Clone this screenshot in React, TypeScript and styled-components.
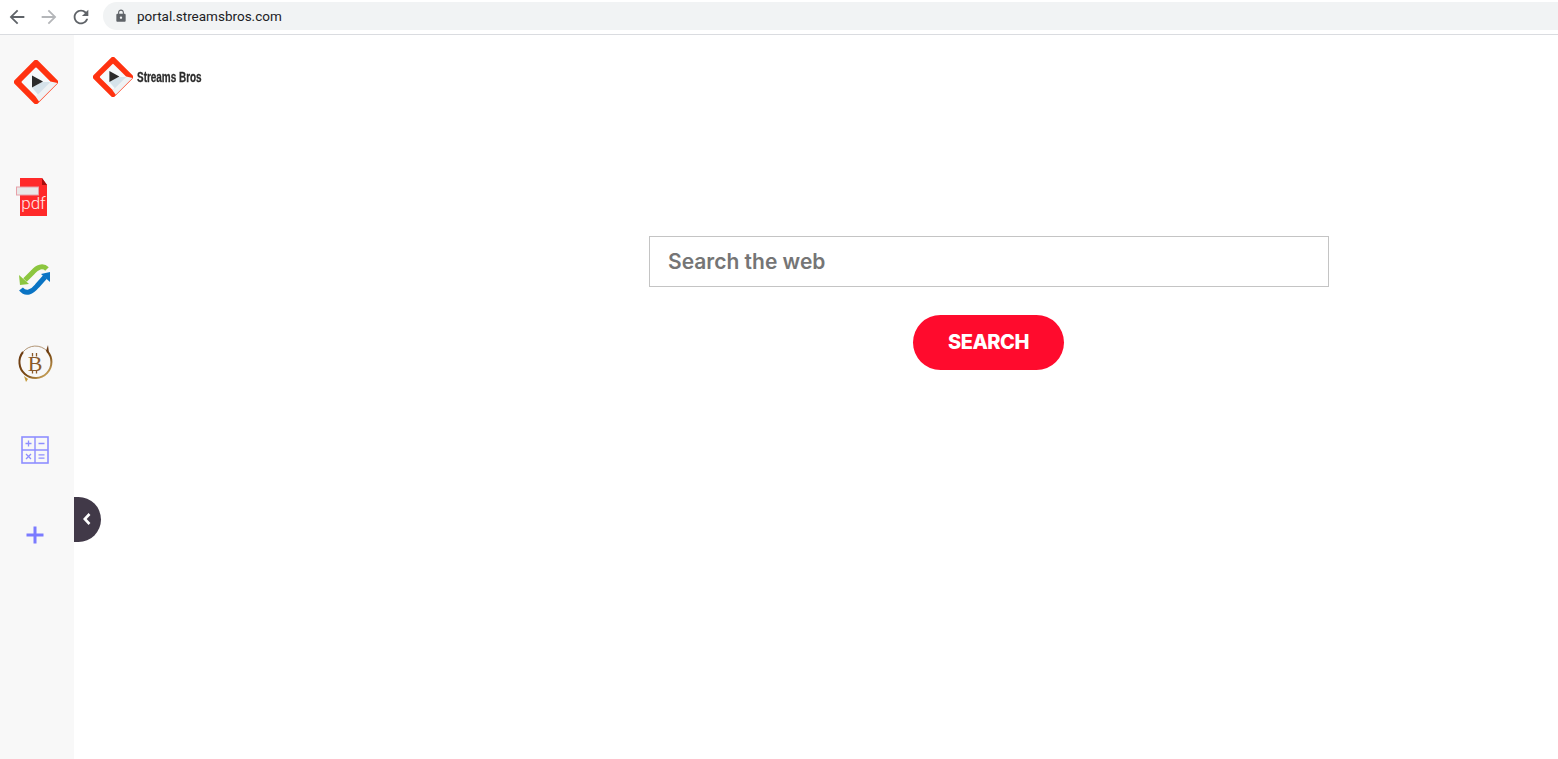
import React from "react";
import styled, { createGlobalStyle } from "styled-components";

const GlobalStyle = createGlobalStyle`
  html, body {
    margin: 0;
    height: 100%;
    background: #ffffff;
    overflow: hidden;
  }
  #root {
    height: 100%;
  }
`;

const Page = styled.div`
  display: flex;
  flex-direction: column;
  height: 100vh;
`;

const BrowserBar = styled.div`
  display: flex;
  align-items: center;
  flex: 0 0 35px;
  box-sizing: border-box;
  height: 35px;
  padding-left: 5px;
  background: #ffffff;
  border-bottom: 1px solid #dadce0;
`;

const NavButton = styled.div<{ $color: string }>`
  display: flex;
  align-items: center;
  justify-content: center;
  width: 24px;
  height: 31px;
  margin-right: 8px;
  color: ${(p) => p.$color};
`;

const AddressBar = styled.div`
  display: flex;
  align-items: center;
  flex: 1;
  height: 28px;
  margin-left: 2px;
  margin-top: -3px;
  padding-left: 11px;
  background: #f1f3f4;
  border-radius: 14px 0 0 14px;
`;

const LockIcon = styled.div`
  display: flex;
  color: #5f6368;
  margin-right: 9px;
`;

const Url = styled.span`
  font-family: "Roboto", "Liberation Sans", sans-serif;
  font-size: 13.5px;
  color: #202124;
`;

const Main = styled.div`
  display: flex;
  flex: 1;
  position: relative;
`;

const Sidebar = styled.aside`
  display: flex;
  flex-direction: column;
  align-items: center;
  flex: 0 0 74px;
  box-sizing: border-box;
  padding-top: 25px;
  background: #f8f8f8;
`;

const SideLogo = styled.div`
  display: flex;
  flex: 0 0 44px;
  margin-right: 2px;
  margin-bottom: 51px;
`;

const SideSlot = styled.div<{ $h: number }>`
  display: flex;
  align-items: center;
  justify-content: center;
  flex: 0 0 ${(p) => p.$h}px;
  height: ${(p) => p.$h}px;
  padding-right: 4px;
`;

const ToggleTab = styled.button`
  position: absolute;
  left: 74px;
  top: 462px;
  display: flex;
  align-items: center;
  justify-content: center;
  width: 27px;
  height: 45px;
  padding: 0 2px 2px 0;
  border: 0;
  border-radius: 0 23px 23px 0;
  background: #413948;
  color: #ffffff;
`;

const Content = styled.main`
  display: flex;
  flex-direction: column;
  flex: 1;
`;

const Brand = styled.div`
  display: flex;
  align-items: center;
  gap: 4px;
  padding: 22px 0 0 19px;
`;

const BrandName = styled.span`
  font-family: "Liberation Sans", sans-serif;
  font-weight: 700;
  font-size: 14px;
  color: #2b2b2b;
  display: inline-block;
  transform: scaleX(0.71);
  transform-origin: left center;
  -webkit-text-stroke: 0.3px #2b2b2b;
`;

const SearchForm = styled.form`
  display: flex;
  flex-direction: column;
  align-items: center;
  width: 680px;
  margin: 139px 0 0 575px;
`;

const SearchInput = styled.input`
  box-sizing: border-box;
  width: 100%;
  height: 51px;
  padding: 0 18px 1px;
  border: 1px solid #c4c4c4;
  border-radius: 0;
  outline: none;
  background: #ffffff;
  font-family: "Inter", "Open Sans", sans-serif;
  font-size: 21px;
  font-weight: 600;
  &::placeholder {
    color: #757575;
    opacity: 1;
  }
`;

const SearchButton = styled.button`
  width: 151px;
  height: 55px;
  margin: 28px 1px 0 0;
  padding: 0 0 2px;
  border: 0;
  border-radius: 28px;
  background: #ff0b2d;
  color: #ffffff;
  font-family: "Inter", "Open Sans", sans-serif;
  font-size: 20px;
  font-weight: 800;
  letter-spacing: -0.5px;
`;

const MaterialIcon = ({ d, size }: { d: string; size: number }) => (
  <svg width={size} height={size} viewBox="0 0 24 24" fill="currentColor">
    <path d={d} />
  </svg>
);

const LogoSvg = styled.svg`
  filter: blur(0.4px);
`;

const StreamsLogo = ({ size }: { size: number }) => (
  <LogoSvg width={size} height={size} viewBox="0 0 44 44">
    <rect x="5.5" y="5.5" width="33" height="33" rx="3" fill="#ff3210" transform="rotate(45 22 22)" />
    <rect x="11.5" y="11.5" width="21" height="21" rx="1" fill="#f6f9fb" transform="rotate(45 22 22)" />
    <path d="M36.5 21.5 L43.5 23 L25 41.5 L21.5 36.5 Z" fill="#eef2f4" />
    <path d="M28 22 L36.5 22 L24 34.5 L18 27.5 Z" fill="#d5e2ea" />
    <path d="M18 15.5 L29 21.5 L18 27.5 Z" fill="#2b2b2b" />
  </LogoSvg>
);

const PdfIcon = () => (
  <svg width="40" height="40" viewBox="0 0 40 40">
    <path d="M5 1 H27 L32 8 V39 H5 Z" fill="#ff2a2a" />
    <path d="M27 1 L32 8 H27 Z" fill="#a80f0f" />
    <rect x="1.5" y="10" width="22" height="8" fill="#e8e8e8" stroke="#e8a0a8" strokeWidth="1" />
    <text x="18.5" y="32" textAnchor="middle" fontFamily="Roboto, sans-serif" fontWeight="300" fontSize="17" fill="#ffe8e8">
      pdf
    </text>
  </svg>
);

const SyncIcon = () => (
  <svg width="32" height="34" viewBox="0 0 32 34">
    <path d="M6 17 L14 9 C18 4 24 2 28 6" fill="none" stroke="#8cc63f" strokeWidth="5" />
    <path d="M0 12 L1 22 L10 21 Z" fill="#8cc63f" />
    <path d="M26 14 L18 23 C13 29 7 32 2 26" fill="none" stroke="#0a74c4" strokeWidth="5" />
    <path d="M31 9 L31 19 L22 11 Z" fill="#0a74c4" />
  </svg>
);

const BitcoinIcon = () => (
  <svg width="36" height="40" viewBox="0 0 36 40">
    <defs>
      <linearGradient id="btcRing" x1="0" y1="0" x2="1" y2="1">
        <stop offset="0" stopColor="#6b3a12" />
        <stop offset="0.55" stopColor="#7a4a14" />
        <stop offset="1" stopColor="#e3c070" />
      </linearGradient>
    </defs>
    <path d="M30 7 A16 16 0 1 1 6 8" fill="none" stroke="url(#btcRing)" strokeWidth="2" />
    <path d="M6 8 A16 16 0 0 1 30 7" fill="none" stroke="#a98a66" strokeWidth="0.9" />
    <path d="M29 7 L31 1 L32 9 Z" fill="#6b3a12" />
    <path d="M7 32 L9 38 L11 35 Z" fill="#c49a3a" />
    <text x="18" y="27" textAnchor="middle" fontFamily="Liberation Serif, serif" fontSize="22" fill="#8a5a2a">
      B
    </text>
    <path d="M15.5 9 V12.5 M19.5 9 V12.5 M15.5 26 V29.5 M19.5 26 V29.5" stroke="#8a5a2a" strokeWidth="1.3" />
  </svg>
);

const CalcIcon = () => (
  <svg width="28" height="28" viewBox="0 0 28 28" fill="none" stroke="#8e8eff">
    <rect x="1" y="1" width="26" height="26" strokeWidth="1.6" />
    <path d="M14 1 V27 M1 14 H27" strokeWidth="1.4" />
    <path d="M4.5 7.5 H10.5 M7.5 4.5 V10.5 M17.5 7.5 H23.5 M5 18 L10 23 M10 18 L5 23 M17.5 18.8 H23.5 M17.5 22.2 H23.5" strokeWidth="1.3" />
  </svg>
);

const PlusIcon = () => (
  <svg width="18" height="18" viewBox="0 0 18 18">
    <path d="M0.5 9 H17.5 M9 0.5 V17.5" stroke="#7b7bff" strokeWidth="3" />
  </svg>
);

const ChevronLeft = () => (
  <svg width="10" height="14" viewBox="0 0 10 14" fill="none">
    <path d="M7.5 2 L2.8 7 L7.5 12" stroke="currentColor" strokeWidth="2.6" />
  </svg>
);

function App() {
  return (
    <Page>
      <GlobalStyle />
      <BrowserBar>
        <NavButton $color="#5f6368">
          <MaterialIcon size={22} d="M20 11H7.83l5.59-5.59L12 4l-8 8 8 8 1.41-1.41L7.83 13H20v-2z" />
        </NavButton>
        <NavButton $color="#b4b6b9">
          <MaterialIcon size={22} d="M12 4l-1.41 1.41L16.17 11H4v2h12.17l-5.58 5.59L12 20l8-8z" />
        </NavButton>
        <NavButton $color="#5f6368">
          <MaterialIcon
            size={22}
            d="M17.65 6.35C16.2 4.9 14.21 4 12 4c-4.42 0-7.99 3.58-7.99 8s3.57 8 7.99 8c3.73 0 6.84-2.55 7.73-6h-2.08c-.82 2.33-3.04 4-5.65 4-3.31 0-6-2.69-6-6s2.69-6 6-6c1.66 0 3.14.69 4.22 1.78L13 11h7V4l-2.35 2.35z"
          />
        </NavButton>
        <AddressBar>
          <LockIcon>
            <MaterialIcon
              size={14}
              d="M18 8h-1V6c0-2.76-2.24-5-5-5S7 3.24 7 6v2H6c-1.1 0-2 .9-2 2v10c0 1.1.9 2 2 2h12c1.1 0 2-.9 2-2V10c0-1.1-.9-2-2-2zm-6 9c-1.1 0-2-.9-2-2s.9-2 2-2 2 .9 2 2-.9 2-2 2zm3.1-9H8.9V6c0-1.71 1.39-3.1 3.1-3.1 1.71 0 3.1 1.39 3.1 3.1v2z"
            />
          </LockIcon>
          <Url>portal.streamsbros.com</Url>
        </AddressBar>
      </BrowserBar>
      <Main>
        <Sidebar>
          <SideLogo>
            <StreamsLogo size={44} />
          </SideLogo>
          <SideSlot $h={84}>
            <PdfIcon />
          </SideSlot>
          <SideSlot $h={82}>
            <SyncIcon />
          </SideSlot>
          <SideSlot $h={86}>
            <BitcoinIcon />
          </SideSlot>
          <SideSlot $h={86}>
            <CalcIcon />
          </SideSlot>
          <SideSlot $h={84}>
            <PlusIcon />
          </SideSlot>
        </Sidebar>
        <ToggleTab type="button">
          <ChevronLeft />
        </ToggleTab>
        <Content>
          <Brand>
            <StreamsLogo size={40} />
            <BrandName>Streams Bros</BrandName>
          </Brand>
          <SearchForm onSubmit={(e) => e.preventDefault()}>
            <SearchInput placeholder="Search the web" />
            <SearchButton type="submit">SEARCH</SearchButton>
          </SearchForm>
        </Content>
      </Main>
    </Page>
  );
}

export default App;
